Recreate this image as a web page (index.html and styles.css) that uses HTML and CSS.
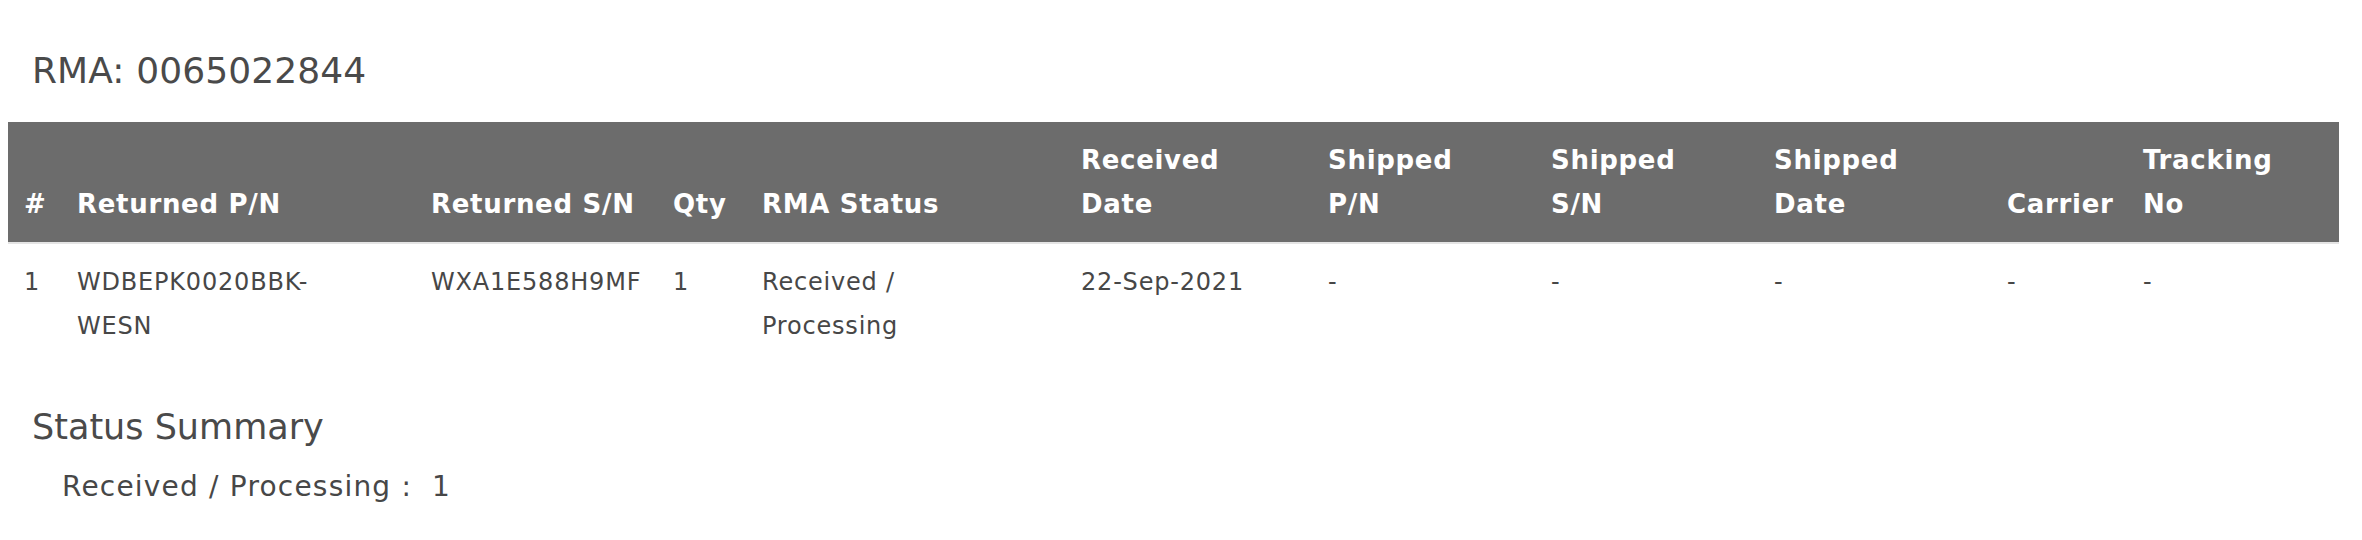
FILE: index.html
```html
<!DOCTYPE html>
<html lang="en">
<head>
<meta charset="utf-8">
<title>RMA 0065022844</title>
<link rel="stylesheet" href="styles.css">
</head>
<body>
<h2 class="rma-title">RMA: 0065022844</h2>
<table class="rma-table">
  <colgroup>
    <col class="c-num"><col class="c-rpn"><col class="c-rsn"><col class="c-qty"><col class="c-status">
    <col class="c-rdate"><col class="c-spn"><col class="c-ssn"><col class="c-sdate"><col class="c-carrier"><col class="c-track">
  </colgroup>
  <thead>
    <tr>
      <th>#</th>
      <th>Returned P/N</th>
      <th>Returned S/N</th>
      <th>Qty</th>
      <th>RMA Status</th>
      <th>Received<br>Date</th>
      <th>Shipped<br>P/N</th>
      <th>Shipped<br>S/N</th>
      <th>Shipped<br>Date</th>
      <th>Carrier</th>
      <th>Tracking<br>No</th>
    </tr>
  </thead>
  <tbody>
    <tr>
      <td>1</td>
      <td><span class="wrap-pn">WDBEPK0020BBK-WESN</span></td>
      <td>WXA1E588H9MF</td>
      <td>1</td>
      <td><span class="wrap-status">Received / Processing</span></td>
      <td>22-Sep-2021</td>
      <td>-</td>
      <td>-</td>
      <td>-</td>
      <td>-</td>
      <td>-</td>
    </tr>
  </tbody>
</table>
<section class="summary">
  <h3 class="summary-title">Status Summary</h3>
  <p class="summary-line"><span class="summary-label">Received / Processing :</span><span class="summary-count">1</span></p>
</section>
</body>
</html>
```
FILE: styles.css
```css
html, body {
  background: #ffffff;
}
body {
  margin: 8px;
  font-family: "DejaVu Sans", "Liberation Sans", sans-serif;
  color: #474747;
}
.rma-title {
  margin: 41px 0 30px 24px;
  font-size: 36px;
  letter-spacing: 0.1px;
  line-height: 43px;
  font-weight: 400;
  color: #4a4a4a;
}
.rma-table {
  width: 2331px;
  table-layout: fixed;
  border-collapse: collapse;
  border-spacing: 0;
}
.c-num { width: 53px; }
.c-rpn { width: 354px; }
.c-rsn { width: 242px; }
.c-qty { width: 89px; }
.c-status { width: 319px; }
.c-rdate { width: 247px; }
.c-spn { width: 223px; }
.c-ssn { width: 223px; }
.c-sdate { width: 233px; }
.c-carrier { width: 136px; }
.c-track { width: 212px; }

.rma-table th {
  background: #6c6c6c;
  color: #ffffff;
  font-size: 26px;
  font-weight: 700;
  letter-spacing: 0.7px;
  line-height: 44px;
  text-align: left;
  vertical-align: bottom;
  white-space: nowrap;
  padding: 16px 0 16px 16px;
  border-bottom: 2px solid #e4e4e4;
}
.rma-table td {
  font-size: 24px;
  letter-spacing: 0.8px;
  line-height: 44px;
  vertical-align: top;
  text-align: left;
  padding: 16px 0 16px 16px;
  color: #474747;
}
.wrap-pn {
  display: block;
  max-width: 260px;
}
.wrap-status {
  display: block;
  max-width: 200px;
}
.summary {
  margin-top: 42px;
}
.summary-title {
  margin: 0 0 22px 24px;
  font-size: 35px;
  line-height: 42px;
  font-weight: 400;
  color: #4a4a4a;
}
.summary-line {
  margin: 0 0 0 54px;
  font-size: 28px;
  line-height: 34px;
  letter-spacing: 1.2px;
  color: #474747;
  display: flex;
  gap: 20px;
}
```
